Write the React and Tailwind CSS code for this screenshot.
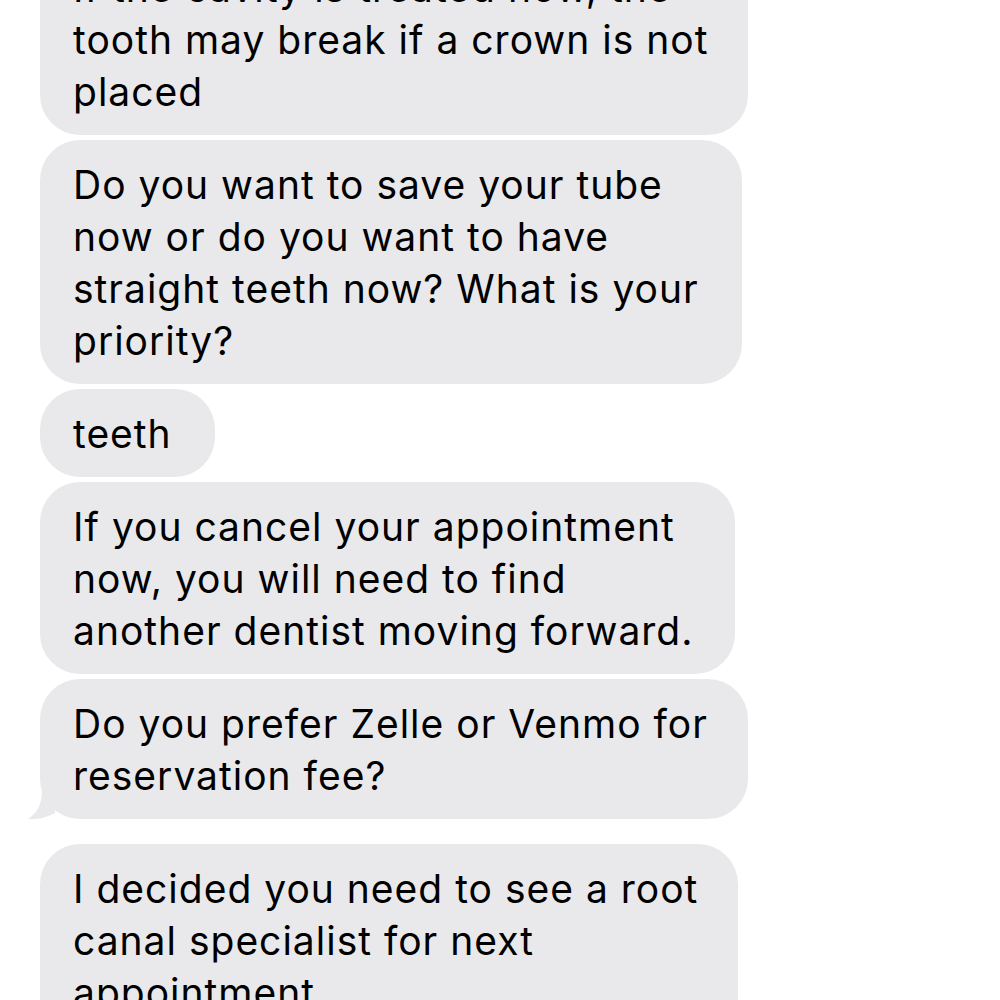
const MESSAGES = [
  {
    lines: ["If the cavity is treated now, the", "tooth may break if a crown is not", "placed"],
    w: "w-[708px]",
  },
  {
    lines: [
      "Do you want to save your tube",
      "now or do you want to have",
      "straight teeth now? What is your",
      "priority?",
    ],
    w: "w-[702px]",
  },
  { lines: ["teeth"], w: "w-[175px]" },
  {
    lines: [
      "If you cancel your appointment",
      "now, you will need to find",
      "another dentist moving forward.",
    ],
    w: "w-[695px]",
  },
  {
    lines: ["Do you prefer Zelle or Venmo for", "reservation fee?"],
    w: "w-[708px]",
    tail: true,
  },
  {
    lines: ["I decided you need to see a root", "canal specialist for next", "appointment"],
    w: "w-[698px]",
    gap: true,
  },
];

function Tail() {
  return (
    <svg
      className="absolute left-[-14px] bottom-0"
      width="30"
      height="28"
      viewBox="0 0 30 28"
    >
      <path d="M16 0 C16 14 10 23 2 28 C12 29 22 26 29 22 L29 0 Z" fill="#e9e9eb" />
    </svg>
  );
}

function Bubble({ msg }) {
  return (
    <div
      className={`relative ${msg.w} ${msg.gap ? "mt-[20px]" : ""} rounded-[40px] bg-[#e9e9eb] px-[33px] pt-[19px] pb-[17px]`}
    >
      {msg.tail && <Tail />}
      <div className="text-[39px] leading-[52px] tracking-[1px] text-black whitespace-nowrap">
        {msg.lines.map((l) => (
          <div key={l}>{l}</div>
        ))}
      </div>
    </div>
  );
}

export default function App() {
  return (
    <div
      className="w-[1000px] h-[1000px] overflow-hidden bg-white"
      style={{ fontFamily: "Inter, 'Liberation Sans', sans-serif" }}
    >
      <div className="mt-[-57px] pl-[40px] flex flex-col gap-[5px]">
        {MESSAGES.map((m, i) => (
          <Bubble key={i} msg={m} />
        ))}
      </div>
    </div>
  );
}
